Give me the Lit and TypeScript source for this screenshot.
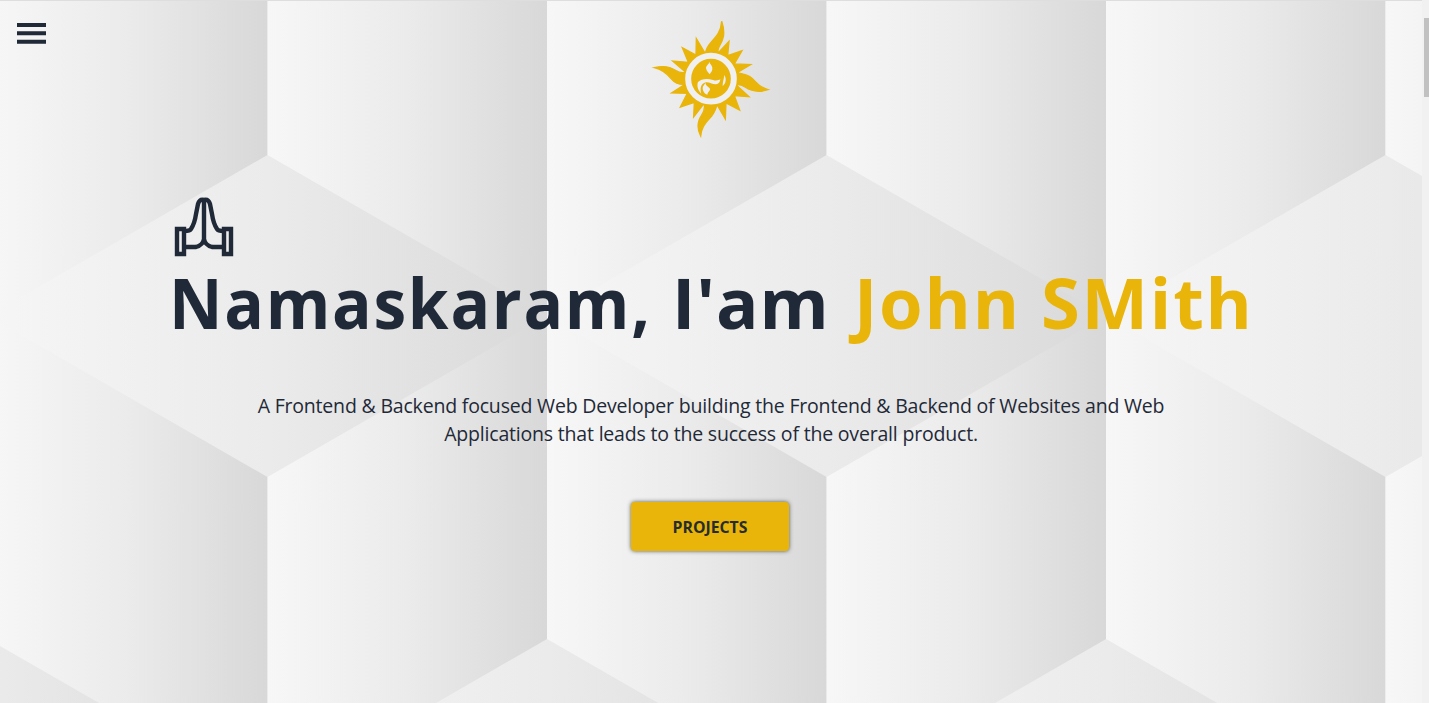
import { LitElement, html, css, svg } from "lit";
import { customElement } from "lit/decorators.js";

const COLUMN_EDGES = [-12, 267.6, 547, 826.6, 1106, 1385.5];
const DIAMONDS = [
  { x: -12, y: 155 },
  { x: 547, y: 155 },
  { x: 1106, y: 155 },
  { x: -291.5, y: 639 },
  { x: 267.6, y: 639 },
  { x: 826.6, y: 639 },
];

@customElement("sun-logo")
export class SunLogo extends LitElement {
  static styles = css`
    :host { display: block; width: 140px; height: 140px; }
    .logo { display: block; width: 100%; height: 100%; fill: #e9b50b; }
    .rays { stroke: #e9b50b; stroke-width: 4; stroke-miterlimit: 5; }
    .light { fill: #efefef; }
    .ring { fill: none; stroke: #f0f0f0; stroke-width: 18; }
  `;
  render() {
    return html`<svg class="logo" viewBox="0 0 420 420">
      <path class="rays" d="M245 34C258 72 248 92 239 107C234 115 232 121 235 128L267 94L263 137L306 122L283 162L332 164L291 188C304 192 315 191 328 199C348 211 352 231 384 239C356 248 333 243 315 231C306 225 298 222 288 224L327 260L283 257L299 300L258 279L256 327L231 284C227 299 224 307 215 318C201 335 185 346 182 378C169 353 173 333 185 315C193 303 196 294 192 281L161 321L163 277L121 291L142 250L95 249L135 223C119 224 106 221 96 209C86 197 73 180 43 173C71 166 91 170 108 182C117 188 127 189 137 187L98 153L145 157L127 113L168 135L169 86L196 131C198 118 204 107 213 97C230 79 243 65 245 34Z"/>
      <circle class="ring" cx="213" cy="206" r="68.5"/>
      <path class="light" d="M208 155C209 162 216 164 217 173C218 183 213 186 209 193C206 187 199 184 198 174C198 166 207 164 208 155Z"/>
      <path class="light" d="M174 216C184 206 202 204 219 210C228 213 236 211 241 208C240 217 236 222 228 223C213 223 207 214 194 218C181 223 180 237 184 251C173 240 170 226 174 216Z"/>
      <path class="light" d="M197 218C195 226 206 230 209 235C213 242 204 244 202 254C193 252 188 242 188 234C188 227 194 224 197 218Z"/>
      <path class="light" d="M253 195C260 206 258 221 248 228C248 215 251 210 253 195Z"/>
    </svg>`;
  }
}

@customElement("app-root")
export class AppRoot extends LitElement {
  static styles = css`
    :host {
      display: block;
      position: relative;
      height: 703px;
      overflow: hidden;
      background: #f1f1f1;
      color: #1f2937;
      font-family: "Segoe UI", "Open Sans", "Noto Sans", sans-serif;
    }
    .backdrop { position: absolute; top: 0; left: 0; width: 1422px; height: 703px; }
    .layout { position: relative; display: flex; height: 703px; }
    .page { width: 1422px; flex: none; box-sizing: border-box; border-top: 1px solid #dedede; }
    .header { display: grid; grid-template-columns: 640px 140px 1fr; padding: 9px 0 0; }
    .menu { margin: 12px 0 0 16px; padding: 0; border: 0; background: none; width: 31px; height: 23px; display: block; }
    .icon { display: block; width: 100%; height: 100%; }
    .hero { display: flex; flex-direction: column; align-items: center; padding-top: 46px; }
    .greeting { width: 1080px; }
    .hands { width: 62px; height: 62px; margin-left: 2px; }
    .title { margin: 0 0 0 -2px; font-size: 70.5px; line-height: 88px; font-weight: 700; letter-spacing: 1.8px; white-space: nowrap; }
    .salute { display: inline-block; transform: scaleX(.934); transform-origin: left; margin-right: -34px; }
    .pronoun { margin-right: 4px; letter-spacing: 1px; }
    .name { color: #e9b50b; }
    .intro { margin: 46px 0 0; font-size: 19.5px; line-height: 28px; font-weight: 400; letter-spacing: -.19px; text-align: center; white-space: nowrap; }
    .button { margin: 54px 2px 0 0; width: 158px; height: 49px; padding: 0; border: 0; border-radius: 4px; background: #e9b50b; color: #262c2c; font: inherit; font-size: 15.8px; font-weight: 700; box-shadow: 0 0 4px rgba(40, 50, 40, .8); }
    .scrollbar { flex: 1; padding: 18px 0 0 2px; background: #f1f1f1; }
    .thumb { height: 79px; background: #c1c1c1; }
  `;
  render() {
    return html`
      <svg class="backdrop" viewBox="0 0 1422 703">
        <defs>
          <linearGradient id="column"><stop offset="0" stop-color="#f7f7f7"/><stop offset=".5" stop-color="#ebebeb"/><stop offset="1" stop-color="#d8d8d8"/></linearGradient>
          <linearGradient id="diamond"><stop offset="0" stop-color="#f6f6f6"/><stop offset=".5" stop-color="#ebebeb"/><stop offset="1" stop-color="#d9d9d9"/></linearGradient>
        </defs>
        ${COLUMN_EDGES.map((x) => svg`<rect x=${x} y="0" width="279.6" height="703" fill="url(#column)"/>`)}
        ${DIAMONDS.map(({ x, y }) => svg`<path d="M${x} ${y + 161}l279.5 -161 279.5 161 -279.5 161z" fill="url(#diamond)"/>`)}
      </svg>
      <div class="layout">
        <main class="page">
          <header class="header">
            <button class="menu" aria-label="Menu">
              <svg class="icon" viewBox="0 0 31 23" fill="#1f2937"><path d="M1 1h29v4H1zM1 9.3h29v4H1zM1 17.7h29v4H1z"/></svg>
            </button>
            <sun-logo></sun-logo>
          </header>
          <section class="hero">
            <div class="greeting">
              <div class="hands">
                <svg class="icon" viewBox="173 196 62 62" fill="none" stroke="#1f2937" stroke-width="4.4">
                  <path d="M204 200V242M204 200C200 199 199 201 198 204L196 214C195 221 193 226 191 229Q190 231 184 231M204 200C208 199 209 201 210 204L212 214C213 221 215 226 217 229Q218 231 224 231M184 247H196Q203 245 204 239Q205 245 212 247H224"/>
                  <path d="M177 229H184V254H177ZM224 229H231V254H224Z"/>
                </svg>
              </div>
              <h1 class="title"><span class="salute">Namaskaram,</span> <span class="pronoun">I'am</span> <span class="name">John SMith</span></h1>
            </div>
            <p class="intro">A Frontend &amp; Backend focused Web Developer building the Frontend &amp; Backend of Websites and Web<br>Applications that leads to the success of the overall product.</p>
            <button class="button">PROJECTS</button>
          </section>
        </main>
        <div class="scrollbar"><div class="thumb"></div></div>
      </div>
    `;
  }
}
